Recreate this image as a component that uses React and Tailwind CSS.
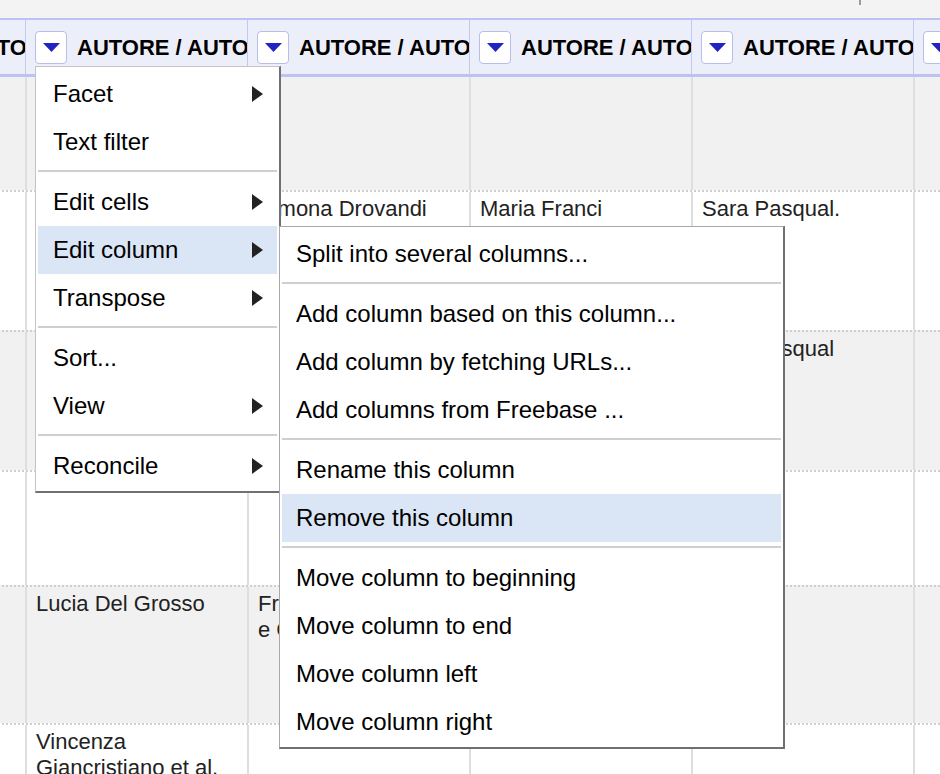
import React from "react";

function DownTri() {
  return (
    <svg width="17" height="9" viewBox="0 0 17 9">
      <path d="M0 0H17L8.5 9Z" fill="#2323c4" />
    </svg>
  );
}

function RightTri() {
  return (
    <svg width="11" height="16" viewBox="0 0 11 16">
      <path d="M0 0L11 8L0 16Z" fill="#222" />
    </svg>
  );
}

function HeaderCell() {
  return (
    <div className="w-[222px] shrink-0 h-full flex items-center pl-[9px] overflow-hidden border-l border-[#c3c9ea]">
      <div className="w-[32px] h-[33px] shrink-0 rounded-[4px] border border-[#b6beea] bg-white flex items-center justify-center">
        <DownTri />
      </div>
      <span className="ml-[10px] whitespace-nowrap font-bold text-[22px] text-black">AUTORE / AUTORE</span>
    </div>
  );
}

function Cell({ children }) {
  return (
    <div className="w-[222px] shrink-0 h-full border-l-2 border-[#dedede] pl-[9px] pr-[8px] pt-[4px] text-[22px] leading-[26px] text-[#222] overflow-hidden">
      {children}
    </div>
  );
}

function Row({ cls, cells }) {
  return (
    <div className={`flex ml-[-197px] shrink-0 ${cls}`}>
      {cells.map((c, i) => (
        <Cell key={i}>{c}</Cell>
      ))}
    </div>
  );
}

function Sep() {
  return <div className="mt-[4px] mb-[6px] h-[2px] bg-[#cfcfcf]" />;
}

function Item({ label, arrow, hl, sub }) {
  return (
    <div
      className={`h-[48px] flex items-center justify-between ${sub ? "pl-[14px]" : "pl-[15px]"} pr-[14px] text-[24px] text-black whitespace-nowrap ${hl ? "bg-[#dae5f5]" : ""}`}
    >
      <span>{label}</span>
      {arrow ? <RightTri /> : null}
    </div>
  );
}

export default function App() {
  const mainItems = [
    { label: "Facet", arrow: true },
    { label: "Text filter" },
    "sep",
    { label: "Edit cells", arrow: true },
    { label: "Edit column", arrow: true, hl: true },
    { label: "Transpose", arrow: true },
    "sep",
    { label: "Sort..." },
    { label: "View", arrow: true },
    "sep",
    { label: "Reconcile", arrow: true },
  ];
  const subItems = [
    { label: "Split into several columns..." },
    "sep",
    { label: "Add column based on this column..." },
    { label: "Add column by fetching URLs..." },
    { label: "Add columns from Freebase ..." },
    "sep",
    { label: "Rename this column" },
    { label: "Remove this column", hl: true },
    "sep",
    { label: "Move column to beginning" },
    { label: "Move column to end" },
    { label: "Move column left" },
    { label: "Move column right" },
  ];

  return (
    <div className="relative w-[940px] h-[774px] overflow-hidden bg-[#f3f3f3] font-['Liberation_Sans',Arial,sans-serif] flex flex-col">
      <div className="h-[18px] shrink-0 relative">
        <span className="absolute left-[859px] top-0 w-[2px] h-[5px] bg-[#9a9a9a]" />
      </div>

      <div className="h-[59px] shrink-0 flex ml-[-197px] bg-[#eceef9] border-t-2 border-b-[3px] border-[#bcc3f4]">
        {[0, 1, 2, 3, 4, 5].map((i) => (
          <HeaderCell key={i} />
        ))}
      </div>

      <Row cls="h-[113px] bg-[#f1f1f1]" cells={["", "", "", "", "", ""]} />
      <Row
        cls="h-[140px] bg-white border-t-2 border-dotted border-[#cfcfcf]"
        cells={["", "", "Simona Drovandi", "Maria Franci", "Sara Pasqual.", ""]}
      />
      <Row
        cls="h-[140px] bg-[#f1f1f1] border-t-2 border-dotted border-[#cfcfcf]"
        cells={["", "", "", "", "Sara Pasqual", ""]}
      />
      <Row cls="h-[115px] bg-white border-t-2 border-dotted border-[#cfcfcf]" cells={["", "", "", "", "", ""]} />
      <Row
        cls="h-[138px] bg-[#f1f1f1] border-t-2 border-dotted border-[#cfcfcf]"
        cells={[
          "",
          "Lucia Del Grosso",
          <>
            <div>Francesca Rossi</div>
            <div>e Carla Neri</div>
          </>,
          "",
          "",
          "",
        ]}
      />
      <Row
        cls="h-[90px] bg-white border-t-2 border-dotted border-[#cfcfcf]"
        cells={["", "Vincenza Giancristiano et al.", "", "", "", ""]}
      />

      <div className="absolute left-[35px] top-[66px] w-[246px] bg-white border-t border-l border-[#c4c4c4] border-r-2 border-b-2 border-r-[#707070] border-b-[#707070] pt-[3px] pb-[1px] px-[2px]">
        {mainItems.map((it, i) => (it === "sep" ? <Sep key={i} /> : <Item key={i} {...it} />))}
      </div>

      <div className="absolute left-[279px] top-[226px] w-[506px] bg-white border-t border-l border-[#a8a8a8] border-r-2 border-b-2 border-r-[#707070] border-b-[#707070] pt-[3px] pb-[1px] px-[2px]">
        {subItems.map((it, i) => (it === "sep" ? <Sep key={i} /> : <Item key={i} sub {...it} />))}
      </div>
    </div>
  );
}
